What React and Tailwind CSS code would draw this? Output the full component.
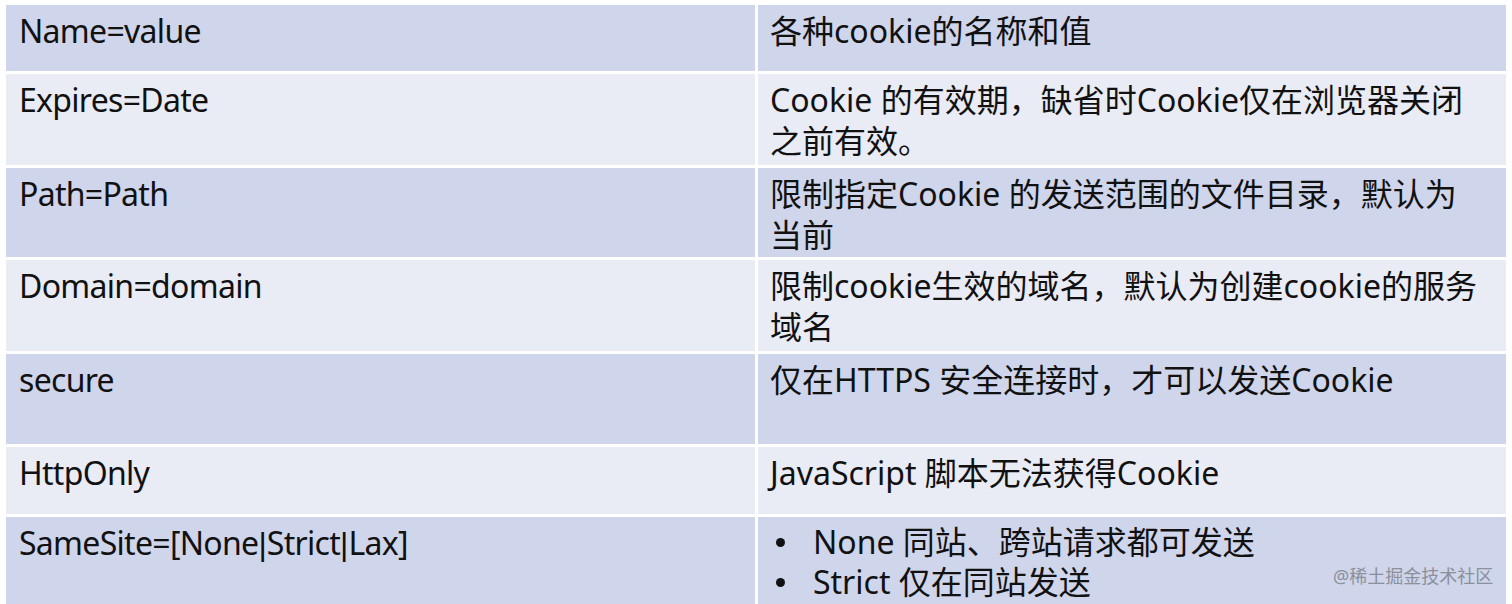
const ROWS = [
  { key: 'Name=value', value: ['各种cookie的名称和值'], h: 'h-[66px]', tone: 'dark' },
  { key: 'Expires=Date', value: ['Cookie 的有效期，缺省时Cookie仅在浏览器关闭', '之前有效。'], h: 'h-[91px]', tone: 'light' },
  { key: 'Path=Path', value: ['限制指定Cookie 的发送范围的文件目录，默认为', '当前'], h: 'h-[89px]', tone: 'dark' },
  { key: 'Domain=domain', value: ['限制cookie生效的域名，默认为创建cookie的服务', '域名'], h: 'h-[91px]', tone: 'light' },
  { key: 'secure', value: ['仅在HTTPS 安全连接时，才可以发送Cookie'], h: 'h-[90px]', tone: 'dark' },
  { key: 'HttpOnly', value: ['JavaScript 脚本无法获得Cookie'], h: 'h-[67px]', tone: 'light' },
]

const toneClass = {
  dark: 'bg-[#cfd5ea]',
  light: 'bg-[#e9ebf5]',
}

function Cell({ tone, h, children, right }) {
  return (
    <div
      className={`${toneClass[tone]} ${h} ${right ? 'pl-[12px]' : 'pl-[13px] tracking-[-0.7px]'} pt-[5px] overflow-hidden`}
    >
      {children}
    </div>
  )
}

const Pipe = () => <span className="font-['Liberation_Sans'] tracking-normal">|</span>

function Bullet({ children }) {
  return (
    <li className="flex items-center whitespace-nowrap">
      <span className="ml-[6px] mr-[28px] h-[9px] w-[9px] shrink-0 rounded-full bg-[#111111]" />
      <span>{children}</span>
    </li>
  )
}

export default function App() {
  return (
    <div
      className="relative h-[604px] w-[1512px] overflow-hidden bg-white text-[32px] leading-[41px] text-[#111111]"
      style={{ fontFamily: '"Noto Sans", "Noto Sans CJK SC", sans-serif' }}
    >
      <div className="ml-[6px] mt-[5px] grid grid-cols-[749px_748px] gap-[3px]">
        {ROWS.map((row) => (
          <div key={row.key} className="contents">
            <Cell tone={row.tone} h={row.h}>
              {row.key}
            </Cell>
            <Cell tone={row.tone} h={row.h} right>
              {row.value.map((line) => (
                <div key={line} className="whitespace-nowrap">
                  {line}
                </div>
              ))}
            </Cell>
          </div>
        ))}

        <Cell tone="dark" h="h-[100px]">
          SameSite=[None<Pipe />Strict<Pipe />Lax]
        </Cell>
        <div className="h-[100px] bg-[#cfd5ea] pl-[12px] pt-[5px]">
          <ul className="leading-[40px]">
            <Bullet>None 同站、跨站请求都可发送</Bullet>
            <Bullet>Strict 仅在同站发送</Bullet>
          </ul>
        </div>
      </div>

      <div className="absolute left-[1333px] top-[564px] text-[18px] leading-[24px] text-[#8b909b]">
        @稀土掘金技术社区
      </div>
    </div>
  )
}
